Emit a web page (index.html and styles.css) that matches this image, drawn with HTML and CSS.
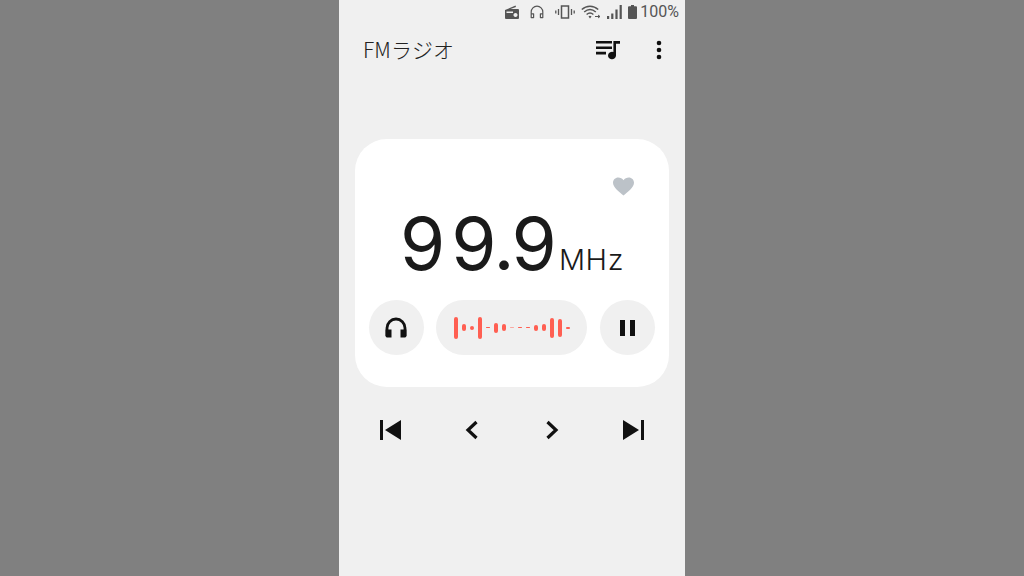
FILE: index.html
```html
<!DOCTYPE html>
<html lang="ja">
<head>
<meta charset="utf-8">
<title>FMラジオ</title>
<link rel="stylesheet" href="styles.css">
</head>
<body>
<div class="phone">
  <div class="status">
    <svg class="si radio" viewBox="0 0 14 14"><path d="M0 5 L10.5 0.6 L11 2 L5.5 4 H13 a1 1 0 0 1 1 1 V13 a1 1 0 0 1 -1 1 H1 a1 1 0 0 1 -1 -1 Z M1.5 6.5 V8 H8 V6.5 Z M10.5 8 a2 2 0 1 0 0.01 0 Z" fill-rule="evenodd"/></svg>
    <svg class="si phones" viewBox="0 0 14 14"><path d="M1.2 12 V7 a5.8 5.8 0 0 1 11.6 0 V12 M1.2 8.8 H3.6 V12.6 H1.2 Z M10.4 8.8 H12.8 V12.6 H10.4 Z" fill="none" stroke="#555" stroke-width="1.2" stroke-linejoin="round"/></svg>
    <svg class="si vib" viewBox="0 0 20 14"><path d="M6.5 1 H13.5 V13 H6.5 Z" fill="none" stroke="#555" stroke-width="1.5"/><path d="M3.5 4 V10 M16.5 4 V10 M0.8 5.5 V8.5 M19.2 5.5 V8.5" stroke="#555" stroke-width="1.3"/></svg>
    <svg class="si wifi" viewBox="0 0 20 14"><path d="M0.8 4.5 C5.5 0 12.5 0 17.2 4.5 M3.2 7 C6.8 3.8 11.2 3.8 14.8 7 M5.6 9.5 C7.8 7.6 10.2 7.6 12.4 9.5" fill="none" stroke="#555" stroke-width="1.5"/><path d="M7.5 11.5 C8.5 10.6 9.5 10.6 10.5 11.5 L9 13.4 Z" fill="#555"/><path d="M14 11.5 H19 M17 10 L19 11.5 L17 13" stroke="#555" stroke-width="1" fill="none"/></svg>
    <svg class="si signal" viewBox="0 0 15 14"><path d="M0 11 H2.2 V14 H0 Z M4.2 8.5 H6.4 V14 H4.2 Z M8.4 4.5 H10.6 V14 H8.4 Z M12.6 0 H14.8 V14 H12.6 Z"/></svg>
    <svg class="si batt" viewBox="0 0 9 14"><path d="M3 0 H6 V1.3 H8 a1 1 0 0 1 1 1 V13 a1 1 0 0 1 -1 1 H1 a1 1 0 0 1 -1 -1 V2.3 a1 1 0 0 1 1 -1 H3 Z"/></svg>
    <span class="pct">100%</span>
  </div>
  <header class="appbar">
    <h1 class="title">FMラジオ</h1>
    <div class="actions">
      <svg class="playlist" viewBox="0 0 24 20"><path d="M0 1 H16 V3.6 H0 Z M0 6.4 H16 V9 H0 Z M0 11.8 H10 V14.4 H0 Z"/><path d="M17.4 1 H24 V3.8 H20 V15.5 A4 3.8 0 1 1 17.4 12 Z"/></svg>
      <svg class="more" viewBox="0 0 6 20"><circle cx="3" cy="3" r="2.3"/><circle cx="3" cy="10" r="2.3"/><circle cx="3" cy="17" r="2.3"/></svg>
    </div>
  </header>
  <main class="card">
    <div class="fav">
      <svg class="heart" viewBox="0 0 22 19"><path d="M11 19 C7 15.5 0 10.5 0 5.6 C0 2.4 2.4 0 5.5 0 C7.6 0 9.8 1 11 3 C12.2 1 14.4 0 16.5 0 C19.6 0 22 2.4 22 5.6 C22 10.5 15 15.5 11 19 Z"/></svg>
    </div>
    <div class="freq"><span class="num"><span class="first">9</span>9<span class="dot">.</span>9</span><span class="unit">MHz</span></div>
    <div class="tools">
      <button class="round">
        <svg class="headset" viewBox="0 0 22 21"><path d="M2 19 V11 a9 9 0 0 1 18 0 V19" fill="none" stroke="#111" stroke-width="2.8"/><path d="M0.6 12.5 H6.5 V20.5 H2 a1.4 1.4 0 0 1 -1.4 -1.4 Z M15.5 12.5 H21.4 V19.1 a1.4 1.4 0 0 1 -1.4 1.4 H15.5 Z"/></svg>
      </button>
      <div class="pill">
        <div class="wave">
          <i class="h22"></i><i class="h7"></i><i class="h4"></i><i class="h22"></i><i class="h1"></i><i class="h10"></i><i class="h7"></i><i class="h1 faint"></i><i class="h1"></i><i class="h1"></i><i class="h6"></i><i class="h7"></i><i class="h20"></i><i class="h18"></i><i class="h2"></i>
        </div>
      </div>
      <button class="round last">
        <svg class="pause" viewBox="0 0 15 16"><path d="M0 0 H5 V16 H0 Z M10 0 H15 V16 H10 Z"/></svg>
      </button>
    </div>
  </main>
  <nav class="transport">
    <button class="tbtn"><svg class="skip" viewBox="0 0 21 20"><path d="M0 0 H3 V20 H0 Z M21 0 V20 L5 10 Z"/></svg></button>
    <button class="tbtn"><svg class="chev" viewBox="0 0 14 20"><path d="M11.5 2 L3 10 L11.5 18" fill="none" stroke="#111" stroke-width="3.2"/></svg></button>
    <button class="tbtn"><svg class="chev next" viewBox="0 0 14 20"><path d="M2.5 2 L11 10 L2.5 18" fill="none" stroke="#111" stroke-width="3.2"/></svg></button>
    <button class="tbtn"><svg class="skip" viewBox="0 0 21 20"><path d="M18 0 H21 V20 H18 Z M0 0 V20 L16 10 Z"/></svg></button>
  </nav>
</div>
</body>
</html>
```
FILE: styles.css
```css
html, body { margin: 0; height: 100%; }
body {
  background: #808080;
  display: flex;
  justify-content: center;
  overflow: hidden;
  font-family: "Inter", "Noto Sans CJK JP", sans-serif;
}
.phone {
  width: 346px;
  height: 576px;
  background: #f0f0f0;
  display: flex;
  flex-direction: column;
}
.status {
  height: 24px;
  padding-bottom: 1px;
  display: flex;
  align-items: center;
  justify-content: flex-end;
  padding-right: 6px;
  color: #555;
}
.si { height: 14px; fill: #555; display: block; }
.radio { width: 14px; margin-right: 11px; }
.phones { width: 14px; margin-right: 11px; }
.vib { width: 20px; margin-right: 6px; }
.wifi { width: 20px; margin-right: 6px; }
.signal { width: 15px; margin-right: 6px; }
.batt { width: 9px; margin-right: 3px; }
.pct { font: 400 16px/24px "Roboto", sans-serif; }
.appbar {
  height: 50px;
  display: flex;
  align-items: center;
  justify-content: space-between;
  padding: 0 23px 0 24px;
}
.title {
  margin: -2px 0 0;
  font: 300 21px/30px "Noto Sans CJK JP", sans-serif;
  letter-spacing: 0.2px;
  color: #222;
}
.actions { display: flex; align-items: center; gap: 36px; margin-top: -1px; }
.playlist { width: 24px; height: 20px; fill: #111; display: block; }
.more { width: 6px; height: 20px; fill: #111; display: block; }
.card {
  margin: 64px 16px 0;
  height: 248px;
  box-sizing: border-box;
  background: #fff;
  border-radius: 32px;
  padding: 38px 14px 32px;
  display: flex;
  flex-direction: column;
}
.fav { display: flex; justify-content: flex-end; padding-right: 21px; }
.heart { width: 21px; height: 19px; fill: #bcc2c8; display: block; }
.freq {
  display: flex;
  align-items: baseline;
  justify-content: center;
  gap: 3px;
  margin-top: 12px;
  height: 72px;
  color: #1a1a1a;
}
.num { font-size: 73px; line-height: 72px; font-weight: 380; letter-spacing: -1px; }
.first { margin-right: 7px; }
.dot { margin: 0 -2px; }
.unit { font-size: 29px; line-height: 30px; font-weight: 300; letter-spacing: 0.6px; }
.tools {
  margin-top: auto;
  display: flex;
  align-items: center;
}
button { border: 0; padding: 0; background: none; }
.round {
  width: 55px;
  height: 55px;
  border-radius: 50%;
  background: #f0f0f0;
  display: flex;
  align-items: center;
  justify-content: center;
}
.round.last { margin-left: auto; }
.headset { width: 22px; height: 21px; fill: #111; display: block; margin: -1px 1px 0 0; }
.pause { width: 15px; height: 16px; fill: #111; display: block; }
.pill {
  width: 151px;
  height: 55px;
  margin-left: 12px;
  border-radius: 28px;
  background: #f0f0f0;
  display: flex;
  align-items: center;
  justify-content: center;
}
.wave { display: flex; align-items: center; gap: 4px; }
.wave i { width: 4px; background: #ff5f52; border-radius: 2px; display: block; }
.wave .faint { opacity: 0.5; }
.h1 { height: 1.5px; }
.h2 { height: 2px; }
.h4 { height: 4px; }
.h6 { height: 6px; }
.h7 { height: 7px; }
.h10 { height: 10px; }
.h18 { height: 18px; }
.h20 { height: 20px; }
.h22 { height: 22px; }
.transport {
  margin-top: 23px;
  padding: 0 11px;
  display: flex;
}
.tbtn {
  width: 81px;
  height: 40px;
  display: flex;
  align-items: center;
  justify-content: center;
}
.skip { width: 21px; height: 20px; fill: #111; display: block; }
.chev { width: 14px; height: 20px; display: block; }
.next { margin-right: 2px; }
```
